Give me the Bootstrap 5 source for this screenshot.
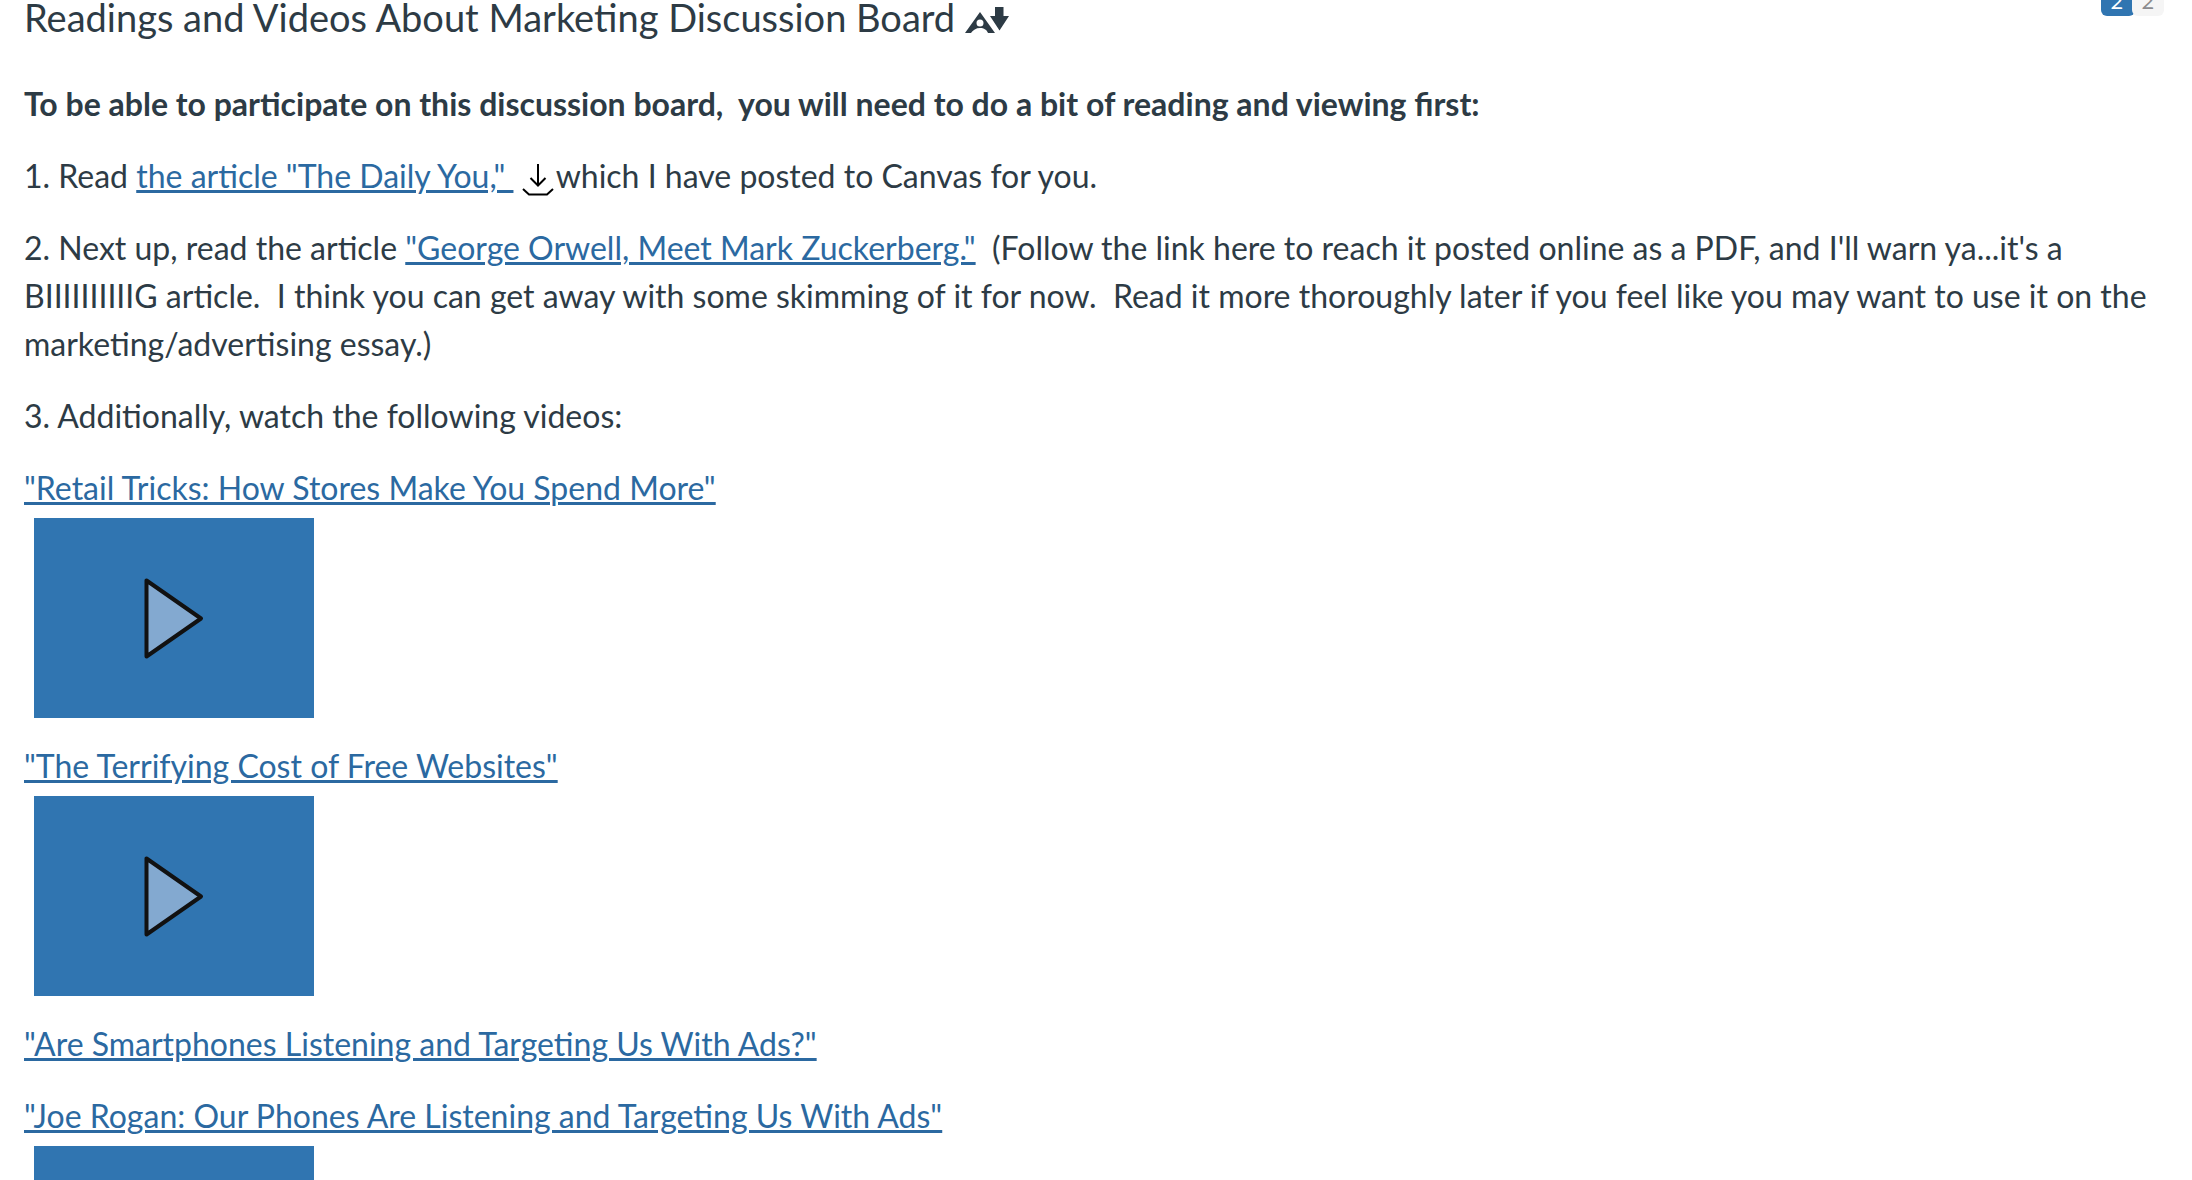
<!DOCTYPE html>
<html lang="en">
<head>
<meta charset="utf-8">
<meta name="viewport" content="width=device-width, initial-scale=1">
<title>Readings and Videos About Marketing Discussion Board</title>
<link rel="stylesheet" href="https://cdn.jsdelivr.net/npm/bootstrap@5.3.0/dist/css/bootstrap.min.css">
<style>
  body { font-family: Lato, "Noto Sans", sans-serif; font-size: 32px; line-height: 48px; color: #2d3b45; }
  a { color: #2b69a1; text-decoration-thickness: 3px; }
  p, .video-item { margin: 0 0 24px; }
  .topic-head { height: 80px; }
  .topic-title { font-size: 38px; line-height: 34px; font-weight: 400; margin: 0; }
  .a11y-icon { width: 44px; height: 30px; vertical-align: -2px; }
  .count-pills { margin: -18px 4px 0 0; font-size: 22px; line-height: 30px; }
  .count-pill { width: 32px; height: 34px; padding-top: 4px; text-align: center; background: #f5f5f5; color: #8b8b8e; border-radius: 6px; }
  .count-pill.unread { width: 34px; margin-right: -3px; padding-right: 2px; background: #3075b1; color: #fff; }
  .download-link { margin-right: 2px; }
  .download-link svg { width: 32px; height: 34px; vertical-align: -9px; }
  .video-thumb { width: 280px; height: 200px; margin: 6px 0 0 10px; padding: 0; border: 0; background: #3075b1; display: block; }
  .video-thumb svg { display: block; width: 280px; height: 200px; }
</style>
<script src="https://cdn.jsdelivr.net/npm/bootstrap@5.3.0/dist/js/bootstrap.bundle.min.js" defer></script>
</head>
<body class="bg-white">
<main class="container-fluid px-4">
  <header class="topic-head d-flex justify-content-between align-items-start">
    <h1 class="topic-title">Readings and Videos About Marketing Discussion Board
      <svg class="a11y-icon" viewBox="0 0 44 30" role="img" aria-label="Alternative formats"><path fill="#2d3b45" fill-rule="evenodd" d="M0 29 15 8l15 21h-7c-1-3-4-5-8-5s-7 2-9 5Zm15-13.500a3.500 3.500 0 1 0 0 7 3.500 3.500 0 0 0 0-7ZM30 3h8.500v9H44l-9.500 14.500L25 12h5Z"/></svg></h1>
    <div class="count-pills d-flex">
      <span class="count-pill unread">2</span><span class="count-pill">2</span>
    </div>
  </header>

  <p><strong>To be able to participate on this discussion board,&nbsp; you will need to do a bit of reading and viewing first:</strong></p>
  <p>1. Read <a href="#daily-you">the article "The Daily You,"&nbsp;</a> <a class="download-link" href="#download" aria-label="Download The Daily You"><svg viewBox="0 0 32 34" fill="none" stroke="#000" stroke-width="2"><path d="M16 1v21M8.500 15l7.500 7.500 7.500-7.500M1 26l6 5.500h18l6-5.500"/></svg></a>which I have posted to Canvas for you.</p>
  <p>2. Next up, read the article <a href="#orwell">"George Orwell, Meet Mark Zuckerberg."</a>&nbsp; (Follow the link here to reach it posted online as a PDF, and I'll warn ya...it's a BIIIIIIIIIIG article.&nbsp; I think you can get away with some skimming of it for now.&nbsp; Read it more thoroughly later if you feel like you may want to use it on the marketing/advertising essay.)</p>
  <p>3. Additionally, watch the following videos:</p>

  <div class="video-item">
    <a href="#retail">"Retail Tricks: How Stores Make You Spend More"</a>
    <button class="video-thumb" type="button" aria-label="Play Retail Tricks"><svg viewBox="0 0 280 200"><path d="M112.500 62.500v76L167 100.500Z" fill="#83a9d0" stroke="#111" stroke-width="4" stroke-linejoin="round"/></svg></button>
  </div>
  <div class="video-item">
    <a href="#websites">"The Terrifying Cost of Free Websites"</a>
    <button class="video-thumb" type="button" aria-label="Play The Terrifying Cost of Free Websites"><svg viewBox="0 0 280 200"><path d="M112.500 62.500v76L167 100.500Z" fill="#83a9d0" stroke="#111" stroke-width="4" stroke-linejoin="round"/></svg></button>
  </div>
  <p><a href="#smartphones">"Are Smartphones Listening and Targeting Us With Ads?"</a></p>
  <div class="video-item">
    <a href="#rogan">"Joe Rogan: Our Phones Are Listening and Targeting Us With Ads"</a>
    <button class="video-thumb" type="button" aria-label="Play Joe Rogan"><svg viewBox="0 0 280 200"><path d="M112.500 62.500v76L167 100.500Z" fill="#83a9d0" stroke="#111" stroke-width="4" stroke-linejoin="round"/></svg></button>
  </div>
</main>
</body>
</html>
